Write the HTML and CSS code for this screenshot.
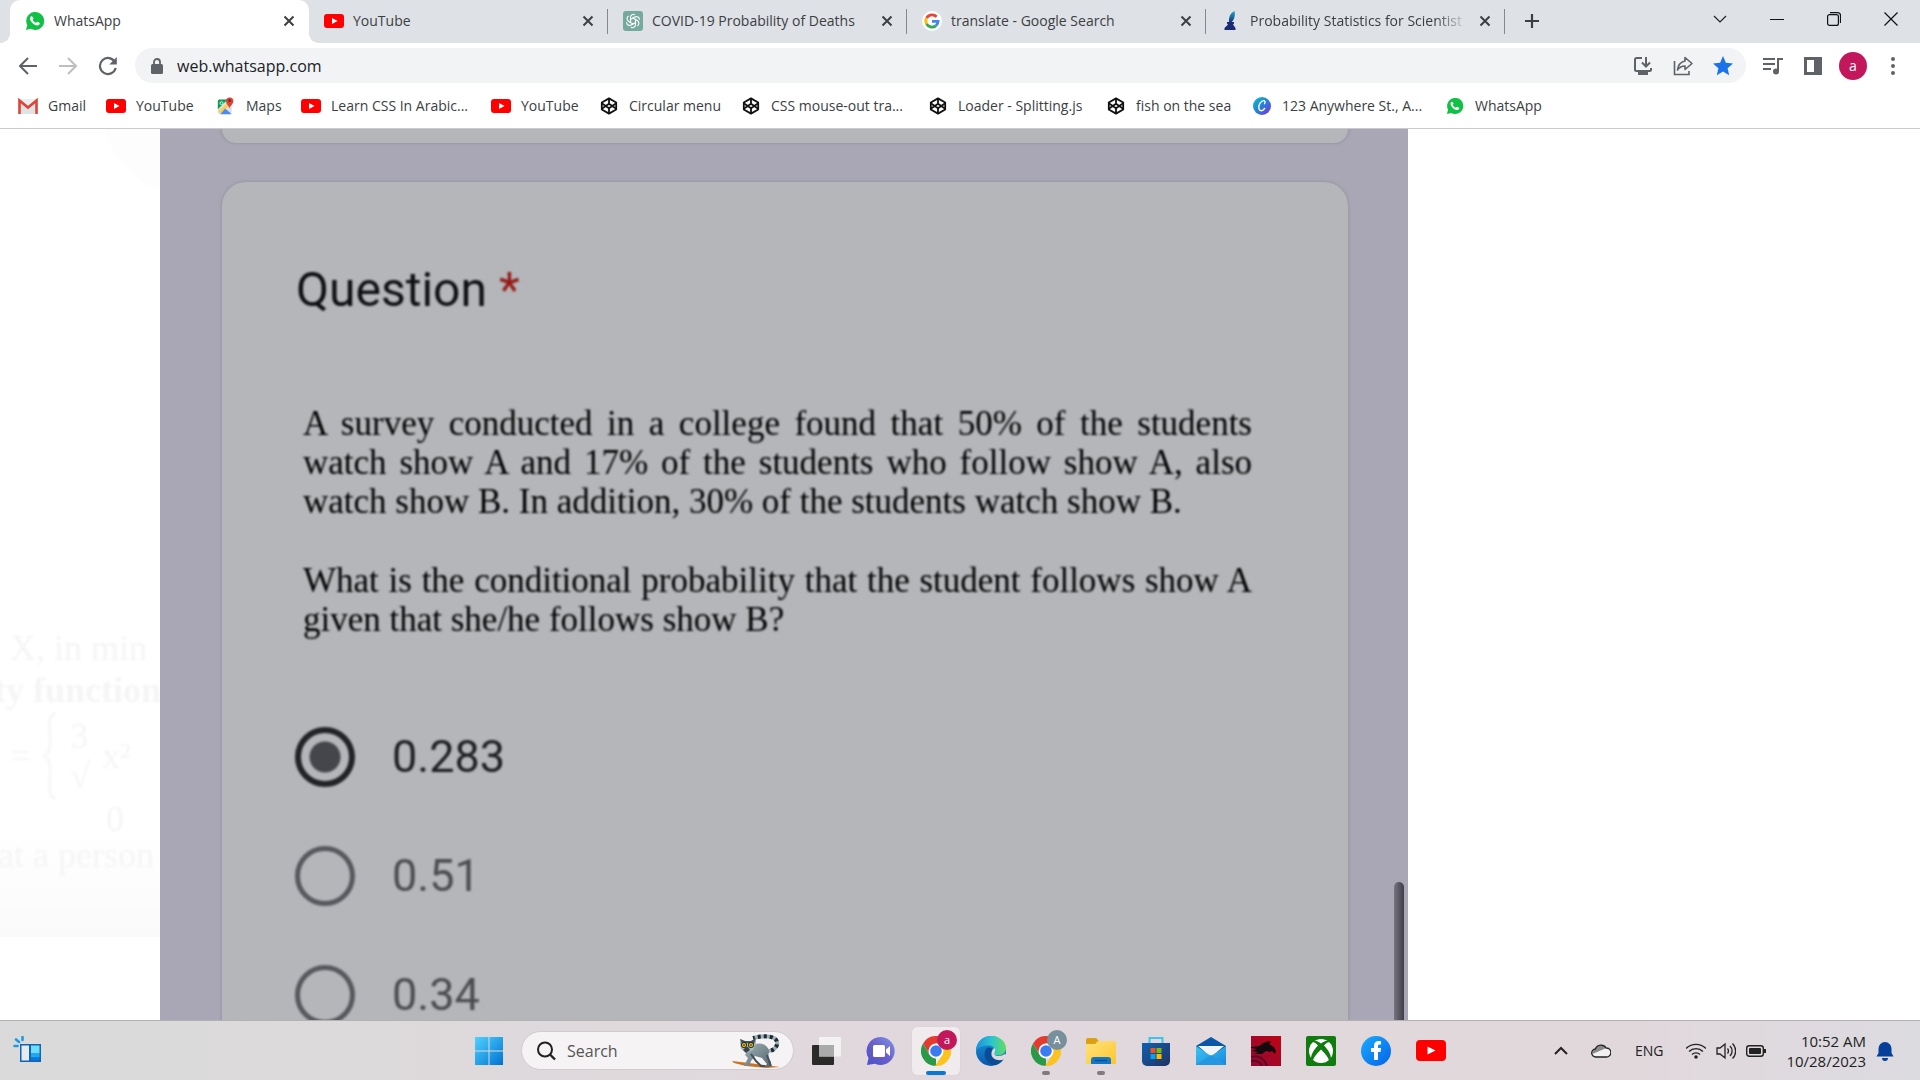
FILE: index.html
```html
<!DOCTYPE html>
<html lang="en">
<head>
<meta charset="utf-8">
<title>WhatsApp</title>
<link rel="stylesheet" href="styles.css">
</head>
<body>
<svg class="defs" aria-hidden="true">
  <defs>
    <linearGradient id="g-canva" x1="0" y1="0" x2="1" y2="1"><stop offset="0" stop-color="#00c4cc"/><stop offset=".5" stop-color="#2a7fd8"/><stop offset="1" stop-color="#7d2ae8"/></linearGradient>
    <linearGradient id="g-quill" x1="0" y1="0" x2="0" y2="1"><stop offset="0" stop-color="#1aa5c8"/><stop offset="1" stop-color="#1b2c74"/></linearGradient>
    <linearGradient id="g-win" x1="0" y1="0" x2="1" y2="1"><stop offset="0" stop-color="#4fd2fd"/><stop offset="1" stop-color="#0072d2"/></linearGradient>
    <linearGradient id="g-chat" x1="0" y1="1" x2="1" y2="0"><stop offset="0" stop-color="#4a50c8"/><stop offset=".5" stop-color="#6a5fc8"/><stop offset="1" stop-color="#7f96ea"/></linearGradient>
    <linearGradient id="g-edge1" x1="0" y1="0" x2="1" y2="0"><stop offset="0" stop-color="#1d8fdc"/><stop offset=".5" stop-color="#2bc3d2"/><stop offset="1" stop-color="#62dd5c"/></linearGradient>
    <linearGradient id="g-edge2" x1="0" y1="0" x2="0" y2="1"><stop offset="0" stop-color="#1a94df"/><stop offset="1" stop-color="#0b59a6"/></linearGradient>
    <linearGradient id="g-folder" x1="0" y1="0" x2="1" y2="1"><stop offset="0" stop-color="#ffe27c"/><stop offset="1" stop-color="#fcc62e"/></linearGradient>
    <linearGradient id="g-store" x1="0" y1="0" x2="1" y2="1"><stop offset="0" stop-color="#0e62b1"/><stop offset="1" stop-color="#22325f"/></linearGradient>
    <linearGradient id="g-mail" x1="0" y1="0" x2="1" y2="1"><stop offset="0" stop-color="#39c6f4"/><stop offset="1" stop-color="#1a86dc"/></linearGradient>
    <linearGradient id="g-fb" x1="0" y1="0" x2="1" y2="1"><stop offset="0" stop-color="#18acfe"/><stop offset="1" stop-color="#0562e8"/></linearGradient>
    <linearGradient id="g-red" x1="0" y1="1" x2="1" y2="0"><stop offset="0" stop-color="#8c0a34"/><stop offset="1" stop-color="#c00414"/></linearGradient>
    <linearGradient id="g-fur" x1="0" y1="0" x2="1" y2="1"><stop offset="0" stop-color="#9fb0b6"/><stop offset="1" stop-color="#55666e"/></linearGradient>

    <symbol id="i-wa" viewBox="0 0 20 20"><path d="M1 19l1.300-4.700A9 9 0 1 1 5.700 17.800z" fill="#10c145"/><path d="M7 5.500c-.6-.5-1.500.1-1.800.9-.8 2.200 1 4.500 2.700 6 1.700 1.500 4.200 2.500 5.700 1.700.8-.4 1.400-1.400 1-2.100-.6-.6-1.500-1.100-2.200-1.300-.6 0-.9 1.200-1.600 1.100-1.300-.4-2.700-1.700-3.200-3 0-.5.900-.9.900-1.500C8.300 6.700 7.600 5.700 7 5.500z" fill="#fff"/></symbol>
    <symbol id="i-yt" viewBox="0 0 20 14"><rect width="20" height="14" rx="3" fill="#f00"/><path d="M8 4l5.500 3L8 10z" fill="#fff"/></symbol>
    <symbol id="i-gpt" viewBox="0 0 20 20"><rect width="20" height="20" rx="3" fill="#75a99c"/><g fill="none" stroke="#fff" stroke-width="1.100"><path d="M7.500 12V6.500c0-2.600 2.600-4 4.600-2.700"/><path d="M7.500 12V6.500c0-2.600 2.600-4 4.600-2.700" transform="rotate(60 10 10)"/><path d="M7.500 12V6.500c0-2.600 2.600-4 4.600-2.700" transform="rotate(120 10 10)"/><path d="M7.500 12V6.500c0-2.600 2.600-4 4.600-2.700" transform="rotate(180 10 10)"/><path d="M7.500 12V6.500c0-2.600 2.600-4 4.600-2.700" transform="rotate(240 10 10)"/><path d="M7.500 12V6.500c0-2.600 2.600-4 4.600-2.700" transform="rotate(300 10 10)"/></g></symbol>
    <symbol id="i-google" viewBox="0 0 20 20"><circle cx="10" cy="10" r="10" fill="#fff"/><g fill="none" stroke-width="2.800"><path d="M14.600 5.800A6.200 6.200 0 0 0 4.600 7" stroke="#ea4335"/><path d="M4.600 7a6.200 6.200 0 0 0 0 6" stroke="#fbbc05"/><path d="M4.600 13a6.200 6.200 0 0 0 9.400 1.600" stroke="#34a853"/><path d="M14 14.600c1.400-1.200 2.100-2.800 2.100-4.300H10" stroke="#4285f4"/></g></symbol>
    <symbol id="i-quill" viewBox="0 0 20 20"><path d="M13.500 0C9 2 7.500 7 8 11l2 1c3-3 4.500-7 3.500-12z" fill="url(#g-quill)"/><path d="M6 11h7v1.500l-1 1 2.500 3.500V19H3.500v-2L7 13.500l-1-1z" fill="#1b2c74"/></symbol>
    <symbol id="i-x" viewBox="0 0 12 12"><path d="M1.500 1.500l9 9M10.500 1.500l-9 9" stroke="#3c4043" stroke-width="2" fill="none"/></symbol>
    <symbol id="i-gmail" viewBox="0 0 20 16"><path d="M1 1h18v15H1z" fill="#eceff1"/><path d="M3 3l7 6 7-6v13H3z" fill="#dfe3e6"/><path d="M1.500 16V2.500L10 9.500l8.500-7V16" fill="none" stroke="#dc4437" stroke-width="2.600"/></symbol>
    <symbol id="i-maps" viewBox="0 0 20 22"><rect y="3" width="17" height="18" rx="2" fill="#dde1e4"/><path d="M0 5a2 2 0 0 1 2-2h10L0 15z" fill="#0f9d58"/><path d="M0 18L15 4l2 3L4 20z" fill="#fbd14b"/><path d="M3 21l6-7 8 7z" fill="#4c8bf5"/><path d="M14 14c0-3-4-5-4-9a4.500 4.500 0 0 1 9 0c0 4-4 6-5 9z" fill="#db4437"/><circle cx="14.500" cy="4.500" r="1.600" fill="#7b231e"/><circle cx="4.500" cy="7.500" r="1.800" fill="none" stroke="#fff"/></symbol>
    <symbol id="i-codepen" viewBox="0 0 20 20"><g fill="none" stroke="#111" stroke-width="2" stroke-linejoin="round"><path d="M10 1.500l8 4.700v7.600l-8 4.700-8-4.700V6.200z"/><path d="M2 7l8 5.500L18 7M2 13l8-5.500 8 5.500M10 1.500v6M10 12.500v6"/></g></symbol>
    <symbol id="i-canva" viewBox="0 0 20 20"><circle cx="10" cy="10" r="10" fill="url(#g-canva)"/><path d="M12.800 7.500c1.200-1.800.4-3.600-1.200-3.400C8.500 4.600 6 9 6.500 12.500c.5 3.400 4 3.800 6.500.2" fill="none" stroke="#fff" stroke-width="1.500" stroke-linecap="round"/></symbol>
    <symbol id="i-chrome" viewBox="0 0 30 30"><path d="M15 7.500h13A15 15 0 0 0 2 7.500l6.500 11z" fill="#e33b2e"/><path d="M2 7.500l6.500 11.300 6.500 3.700L15 30A15 15 0 0 1 2 7.500z" fill="#2a9a48"/><path d="M28 7.500H15l6.500 11.300L14 30A15 15 0 0 0 28 7.500z" fill="#fcc31e"/><circle cx="15" cy="15" r="7.500" fill="#fff"/><circle cx="15" cy="15" r="5.800" fill="#3a7cf0"/></symbol>
  </defs>
</svg>

<header class="browser">
  <nav class="tabs" aria-label="Tabs">
    <div class="tab active"><svg class="fav"><use href="#i-wa"/></svg><span class="title">WhatsApp</span><button class="close" aria-label="Close tab"><svg><use href="#i-x"/></svg></button></div>
    <div class="tab"><svg class="fav"><use href="#i-yt"/></svg><span class="title">YouTube</span><button class="close" aria-label="Close tab"><svg><use href="#i-x"/></svg></button></div>
    <div class="tab"><svg class="fav"><use href="#i-gpt"/></svg><span class="title">COVID-19 Probability of Deaths</span><button class="close" aria-label="Close tab"><svg><use href="#i-x"/></svg></button></div>
    <div class="tab"><svg class="fav"><use href="#i-google"/></svg><span class="title">translate - Google Search</span><button class="close" aria-label="Close tab"><svg><use href="#i-x"/></svg></button></div>
    <div class="tab"><svg class="fav"><use href="#i-quill"/></svg><span class="title fade">Probability Statistics for Scientist</span><button class="close" aria-label="Close tab"><svg><use href="#i-x"/></svg></button></div>
    <button class="newtab" aria-label="New tab"><svg viewBox="0 0 16 16"><path d="M8 1v14M1 8h14" stroke="#3c4043" stroke-width="2.200"/></svg></button>
    <div class="winctl">
      <button aria-label="Search tabs"><svg viewBox="0 0 14 14"><path d="M1 4l6 6 6-6" fill="none" stroke="#222" stroke-width="1.200"/></svg></button>
      <button aria-label="Minimize"><svg viewBox="0 0 14 14"><path d="M0 7.500h14" stroke="#111"/></svg></button>
      <button aria-label="Restore"><svg viewBox="0 0 14 14"><rect x=".6" y="2.600" width="10.800" height="10.800" rx="2" fill="none" stroke="#111" stroke-width="1.200"/><path d="M3 .6h7.500a3 3 0 0 1 3 3V11" fill="none" stroke="#111" stroke-width="1.200"/></svg></button>
      <button aria-label="Close"><svg viewBox="0 0 14 14"><path d="M.5.5l13 13M13.500.5l-13 13" stroke="#111" stroke-width="1.200"/></svg></button>
    </div>
  </nav>

  <div class="toolbar">
    <button class="tool" aria-label="Back"><svg viewBox="0 0 20 20"><path d="M19 10H3M10 2l-8 8 8 8" fill="none" stroke="#5f6368" stroke-width="2"/></svg></button>
    <button class="tool" aria-label="Forward"><svg viewBox="0 0 20 20"><path d="M1 10h16M10 2l8 8-8 8" fill="none" stroke="#bcbec1" stroke-width="2"/></svg></button>
    <button class="tool" aria-label="Reload"><svg viewBox="0 0 20 20"><path d="M17 6.200A8 8 0 1 0 17.700 12" fill="none" stroke="#5f6368" stroke-width="2.200"/><path d="M18.800 1v7.500h-7.500z" fill="#5f6368"/></svg></button>
    <div class="omnibox">
      <svg class="lock" viewBox="0 0 12 16"><rect y="6" width="12" height="10" rx="1.500" fill="#5f6368"/><path d="M3 7V4a3 3 0 0 1 6 0v3" fill="none" stroke="#5f6368" stroke-width="1.800"/></svg>
      <input class="url" type="text" value="web.whatsapp.com" aria-label="Address">
      <button class="tool" aria-label="Install app"><svg viewBox="0 0 20 20"><path d="M9 2H3.500A1.500 1.500 0 0 0 2 3.500v10A1.500 1.500 0 0 0 3.500 15h13a1.500 1.500 0 0 0 1.500-1.500V12" fill="none" stroke="#5f6368" stroke-width="2"/><path d="M5 15h10v4H5z" fill="#5f6368"/><path d="M13 1v9M9 6.500l4 4 4-4" fill="none" stroke="#5f6368" stroke-width="2"/></svg></button>
      <button class="tool" aria-label="Share"><svg viewBox="0 0 20 20"><path d="M1.500 5v13.500H16V15" fill="none" stroke="#5f6368" stroke-width="1.600"/><path d="M12 1.500l7 6-7 6V10c-3.500 0-5.500 1-7.500 4 .5-5 3.500-8 7.500-9z" fill="none" stroke="#5f6368" stroke-width="1.600" stroke-linejoin="round"/></svg></button>
      <button class="tool" aria-label="Edit bookmark"><svg viewBox="0 0 20 20"><path d="M10 0l2.900 6.700 7.100.7-5.400 4.800 1.600 7.100L10 15.600l-6.200 3.700 1.600-7.100L0 7.400l7.100-.7z" fill="#1a73e8"/></svg></button>
    </div>
    <button class="tool" aria-label="Media controls"><svg viewBox="0 0 20 20"><path d="M0 3h12M0 8h12M0 13h8M15 15V3h5" fill="none" stroke="#5f6368" stroke-width="2"/><circle cx="13" cy="15.500" r="3" fill="#5f6368"/></svg></button>
    <button class="tool" aria-label="Side panel"><svg viewBox="0 0 20 20"><path d="M1 1h18v18H1zM4 4v12h7V4z" fill="#5f6368" fill-rule="evenodd"/></svg></button>
    <button class="avatar" aria-label="Profile">a</button>
    <button class="tool" aria-label="Menu"><svg viewBox="0 0 20 20"><g fill="#5f6368"><circle cx="10" cy="3" r="2"/><circle cx="10" cy="10" r="2"/><circle cx="10" cy="17" r="2"/></g></svg></button>
  </div>

  <nav class="bookmarks" aria-label="Bookmarks">
    <a href="#"><svg><use href="#i-gmail"/></svg>Gmail</a>
    <a href="#"><svg><use href="#i-yt"/></svg>YouTube</a>
    <a href="#"><svg><use href="#i-maps"/></svg>Maps</a>
    <a href="#"><svg><use href="#i-yt"/></svg>Learn CSS In Arabic...</a>
    <a href="#"><svg><use href="#i-yt"/></svg>YouTube</a>
    <a href="#"><svg><use href="#i-codepen"/></svg>Circular menu</a>
    <a href="#"><svg><use href="#i-codepen"/></svg>CSS mouse-out tra...</a>
    <a href="#"><svg><use href="#i-codepen"/></svg>Loader - Splitting.js</a>
    <a href="#"><svg><use href="#i-codepen"/></svg>fish on the sea</a>
    <a href="#"><svg><use href="#i-canva"/></svg>123 Anywhere St., A...</a>
    <a href="#"><svg><use href="#i-wa"/></svg>WhatsApp</a>
  </nav>
</header>

<main class="viewer">
  <aside class="ghost">
    <p>X, in min</p>
    <p class="strong">ty function</p>
    <div class="formula">
      <span>=</span>
      <svg class="brace" viewBox="0 0 16 90"><path d="M14 2C4 4 9 20 8 32c0 8-2 11-6 13 4 2 6 5 6 13 1 12-4 28 6 30" fill="none" stroke="#f7f7f7" stroke-width="3"/></svg>
      <span class="frac">3<br>√</span>
      <span>x²</span>
    </div>
    <p class="zero">0</p>
    <p class="last">at a person</p>
  </aside>
  <section class="photo">
    <div class="card previous"></div>
    <form class="card question">
      <h1>Question <span class="star">*</span></h1>
      <div class="statement">
        <p class="full">A survey conducted in a college found that 50% of the students</p>
        <p class="full">watch show A and 17% of the students who follow show A, also</p>
        <p>watch show B. In addition, 30% of the students watch show B.</p>
        <p class="full second">What is the conditional probability that the student follows show A</p>
        <p>given that she/he follows show B?</p>
      </div>
      <div class="options">
        <label class="chosen"><input type="radio" name="answer" checked>0.283</label>
        <label><input type="radio" name="answer">0.51</label>
        <label><input type="radio" name="answer">0.34</label>
      </div>
    </form>
    <div class="thumb"></div>
  </section>
</main>

<footer class="taskbar">
  <div class="left">
    <button class="app" aria-label="Widgets"><svg viewBox="0 0 30 30"><path d="M1.500 10h3M3 3.500l3 2.500M9.500 1v3" stroke="#1c9be0" stroke-width="2.600" stroke-linecap="round"/><rect x="7" y="8" width="21" height="18" fill="#1464b4"/><path d="M8.500 9.500H16v15H8.500z" fill="#e6ebf1"/><path d="M18 9.500h8.500v8H18z" fill="#6cdcff"/><path d="M18 17.500h8.500v4H18z" fill="#1fa6f4"/><path d="M18 21.500h8.500v3H18z" fill="#0a78d8"/></svg></button>
  </div>
  <div class="center">
    <button class="app" aria-label="Start"><svg viewBox="0 0 30 30"><path d="M1 1h13.500v13.500H1zM15.500 1H29v13.500H15.500zM1 15.500h13.500V29H1zM15.500 15.500H29V29H15.500z" fill="url(#g-win)"/></svg></button>
    <div class="search">
      <svg class="glass" viewBox="0 0 20 20"><circle cx="9" cy="8.500" r="7" fill="none" stroke="#222" stroke-width="2"/><path d="M14 13.500l5 5" stroke="#222" stroke-width="2.400"/></svg>
      <input type="text" placeholder="Search" aria-label="Search">
      <svg class="lemur" viewBox="0 0 50 34">
        <path d="M1 27l17 2 31 4-14 1-20-2-12-3z" fill="#c9721f"/>
        <path d="M34 17c8 1 13-4 12-9-1-6-12-7-24-4" fill="none" stroke="#9eb0b8" stroke-width="4"/>
        <path d="M34 17c8 1 13-4 12-9-1-6-12-7-24-4" fill="none" stroke="#1f2b33" stroke-width="4" stroke-dasharray="3 3"/>
        <path d="M18 14c7-7 18-6 20 3l-1 7 3 4-1 5h-6l3-3-5-6-7-2-4 5-2 5h-5l4-8-3-3z" fill="url(#g-fur)"/>
        <path d="M20 20l5 7 5 5h4M36 21l4 11" fill="none" stroke="#425159" stroke-width="2"/>
        <path d="M9 5l5 2h6l5-3v6l-3 6-6 3-6-4-1-5z" fill="#a9b8bd"/>
        <path d="M9 5l5 2h6l5-3-2 6-6-1-6 1z" fill="#435158"/>
        <circle cx="13" cy="11" r="3" fill="#222e35"/><circle cx="20" cy="11" r="3" fill="#222e35"/><circle cx="13" cy="11" r="2" fill="#ffc400"/><circle cx="20" cy="11" r="2" fill="#ffc400"/><circle cx="13" cy="11" r=".8"/><circle cx="20" cy="11" r=".8"/>
        <path d="M12 16l3-3h2l2 3-4 3z" fill="#37444a"/>
      </svg>
    </div>
    <button class="app" aria-label="Task view"><svg viewBox="0 0 30 30"><rect x="1" y="9" width="22" height="20" rx="1" fill="#2a2a28"/><path d="M8 1h22v19.500H8z" fill="#f7f7f7" opacity=".8"/><path d="M8 9h15v11.500H8z" fill="#aaa"/></svg></button>
    <button class="app" aria-label="Chat"><svg viewBox="0 0 30 30"><path d="M15 1a14 14 0 1 1-6 26.800L1 29l1.500-7A14 14 0 0 1 15 1z" fill="url(#g-chat)"/><rect x="7" y="9" width="12" height="12" rx="1.500" fill="#fff"/><path d="M20 13.500l4-3.500v10l-4-3.500z" fill="#fff"/></svg></button>
    <button class="app current" aria-label="Chrome"><svg><use href="#i-chrome"/></svg><span class="badge">a</span></button>
    <button class="app" aria-label="Edge"><svg viewBox="0 0 30 30"><circle cx="15" cy="15" r="15" fill="url(#g-edge2)"/><path d="M0 14C1 5 7 0 15 0c9 0 15 6 15 12 0 5-4 7.500-8 7.500-3 0-5-1-4-3 2-4-1-7-5-7C6 9.500 1 12 0 16z" fill="url(#g-edge1)"/><path d="M10 13c-4 8 1 16 10 16 4-2 7-4 8-7-6 3-13 1-13-4 0-3 1-4 2-4-2-3-5-3-7-1z" fill="#0b4c96"/><path d="M18.500 12c2 3-1 5 0 6.500 2 2.500 8 1.500 10-.5l3 2-3 3c-6 3-13 0-13-5 0-3 1-5 3-6z" fill="#e1d8dd"/></svg></button>
    <button class="app open" aria-label="Chrome, second profile"><svg><use href="#i-chrome"/></svg><span class="badge grey">A</span></button>
    <button class="app open" aria-label="File Explorer"><svg viewBox="0 0 30 30"><path d="M0 4a2 2 0 0 1 2-2h8l3 3v4H0z" fill="#dda012"/><path d="M0 8h9l3-3h16a2 2 0 0 1 2 2v21H0z" fill="url(#g-folder)"/><path d="M5 28v-4a3 3 0 0 1 3-3h14a3 3 0 0 1 3 3v4z" fill="#1475c4"/><path d="M9 24.500h12" stroke="#0a4f93" stroke-width="1.500"/></svg></button>
    <button class="app" aria-label="Store"><svg viewBox="0 0 30 30"><path d="M8.500 8V2h13v6" fill="none" stroke="#3cc3ee" stroke-width="2"/><path d="M1 7h28v18a5 5 0 0 1-5 5H6a5 5 0 0 1-5-5z" fill="url(#g-store)"/><path d="M9.500 12h5v5h-5z" fill="#f25022"/><path d="M15.500 12h5v5h-5z" fill="#7fba00"/><path d="M9.500 18h5v5h-5z" fill="#00a4ef"/><path d="M15.500 18h5v5h-5z" fill="#ffb900"/></svg></button>
    <button class="app" aria-label="Mail"><svg viewBox="0 0 30 30"><path d="M0 10L15 1l15 9v6H0z" fill="#0b56a5"/><path d="M2 10h26L15 21z" fill="#f1f3f5"/><path d="M0 10l15 10 15-10v19H0z" fill="url(#g-mail)"/><path d="M0 29l15-10 15 10z" fill="#2496e2"/></svg></button>
    <button class="app" aria-label="Dragon"><svg viewBox="0 0 30 30"><path d="M0 0h30v30H0z" fill="url(#g-red)"/><path d="M0 11l8-1 4-3 6-2 2 1-2 2 5 3 2 4-1 3-3-3-2 1-4-1-4 3-8 0 4-2-6-1 5-2-6-1z" fill="#16090d"/><path d="M0 21c7-2 13 1 16 9M0 25c5-1 9 1 11 5" fill="none" stroke="#5d0724" stroke-width="2"/></svg></button>
    <button class="app" aria-label="Xbox"><svg viewBox="0 0 30 30"><rect width="30" height="30" rx="2" fill="#107c10"/><circle cx="15" cy="15" r="12" fill="#fff"/><path d="M7 5c3-1 6 1 8 2.500C17 6 20 4 23 5l1 1c-2 0-4 1-6 3.500 4 4 7 9 7 13l-2 2c-1-4-5-8-8-11-3 3-7 7-8 11l-2-2c0-4 3-9 7-13C10 7 8 6 6 6z" fill="#107c10"/></svg></button>
    <button class="app" aria-label="Facebook"><svg viewBox="0 0 30 30"><circle cx="15" cy="15" r="15" fill="url(#g-fb)"/><path d="M13 24v-8h-3v-4h3v-2.500C13 6.500 15 5 17.500 5H20v3.500h-1.500c-1.200 0-1.500.6-1.500 1.500v2h3l-.5 4H17v8z" fill="#fff"/></svg></button>
    <button class="app" aria-label="YouTube"><svg viewBox="0 0 30 30"><rect y="4" width="30" height="21" rx="4" fill="#f00"/><path d="M11.500 10.500l8 4-8 4z" fill="#fff"/></svg></button>
  </div>
  <div class="tray">
    <svg viewBox="0 0 20 20"><path d="M4 13l6-6 6 6" fill="none" stroke="#222" stroke-width="2"/></svg>
    <svg class="cloud" viewBox="0 0 20 20"><path d="M5 16a4 4 0 0 1-.6-8A6 6 0 0 1 15.200 7 4.500 4.500 0 0 1 15.500 16z" fill="#f1f1f1"/><path d="M1.500 13a4 4 0 0 1 3-5A6 6 0 0 1 15.200 7C11 9 6 11 1.500 13z" fill="#8b8b8b"/><path d="M5 16a4 4 0 0 1-.6-8A6 6 0 0 1 15.200 7 4.500 4.500 0 0 1 15.500 16z" fill="none" stroke="#222" stroke-width="1.300"/></svg>
    <span class="lang">ENG</span>
    <div class="status">
      <svg viewBox="0 0 20 20"><g fill="none" stroke="#222" stroke-width="1.300"><path d="M0 7.500a14 14 0 0 1 20 0M3 10.500a10 10 0 0 1 14 0M6 13.500a5.700 5.700 0 0 1 8 0"/></g><circle cx="10" cy="16" r="1.800" fill="#222"/></svg>
      <svg viewBox="0 0 20 20"><g fill="none" stroke="#222" stroke-width="1.300"><path d="M1 7h3l5-4v14l-5-4H1zM11.500 7.500a4 4 0 0 1 0 5M14 5a7 7 0 0 1 0 10M16.500 2.500a10.500 10.500 0 0 1 0 15"/></g></svg>
      <svg viewBox="0 0 20 20"><rect x=".7" y="4.700" width="16.600" height="10.600" rx="2.500" fill="none" stroke="#222" stroke-width="1.400"/><rect x="3" y="7" width="12" height="6" rx="1" fill="#222"/><path d="M18 8h2v4h-2z" fill="#222"/></svg>
    </div>
    <div class="clock"><time>10:52 AM</time><time>10/28/2023</time></div>
    <svg class="bell" viewBox="0 0 20 20"><path d="M10 1a6.500 6.500 0 0 1 6.500 6.500V12l2 3.500h-17l2-3.500V7.500A6.500 6.500 0 0 1 10 1zM7 17h6a3 3 0 0 1-6 0z" fill="#053f97"/></svg>
  </div>
</footer>
</body>
</html>
```
FILE: styles.css
```css
* { box-sizing: border-box; }
body {
  margin: 0;
  height: 100vh;
  display: flex;
  flex-direction: column;
  overflow: hidden;
  background: #fff;
  color: #3c4043;
  font-family: "Open Sans", "Noto Sans", sans-serif;
  font-size: 14px;
}
button, input { font: inherit; color: inherit; }
button { border: 0; padding: 0; background: none; display: grid; place-items: center; }
p, h1 { margin: 0; }
.defs { position: absolute; width: 0; height: 0; }

/* Tab strip */
.tabs { display: flex; height: 43px; padding-left: 10px; background: #dee1e6; }
.tab {
  display: flex;
  align-items: center;
  gap: 9px;
  flex: 0 1 299px;
  min-width: 0;
  height: 41px;
  padding: 0 14px 0 15px;
  position: relative;
}
.tab + .tab:not(.active)::after {
  content: "";
  position: absolute;
  right: 0;
  top: 9px;
  height: 25px;
  width: 1px;
  background: #85888d;
}
.active {
  height: 43px;
  padding-bottom: 2px;
  background: #fff;
  border-radius: 10px 10px 0 0;
}
.active::before, .active::after {
  content: "";
  position: absolute;
  bottom: 0;
  width: 10px;
  height: 10px;
}
.active::before { left: -10px; background: radial-gradient(circle at 0 0, #dee1e6 10px, #fff 10px); }
.active::after { right: -10px; background: radial-gradient(circle at 100% 0, #dee1e6 10px, #fff 10px); }
.fav { flex: none; width: 20px; height: 20px; }
.title { flex: 1; overflow: hidden; white-space: nowrap; }
.fade { -webkit-mask-image: linear-gradient(90deg, #000 84%, transparent 99%); mask-image: linear-gradient(90deg, #000 84%, transparent 99%); }
.close svg { width: 12px; height: 12px; }
.newtab { width: 54px; height: 41px; }
.newtab svg { width: 16px; height: 16px; }
.winctl { display: flex; margin-left: auto; padding-right: 1px; }
.winctl button { width: 57px; height: 37px; }
.winctl svg { width: 14px; height: 14px; }

/* Toolbar */
.toolbar { display: flex; align-items: center; height: 45px; padding: 0 7px 0 8px; }
.tool { width: 40px; height: 36px; }
.tool svg { width: 20px; height: 20px; }
.omnibox {
  flex: 1;
  display: flex;
  align-items: center;
  height: 35px;
  margin: 0 7px;
  padding: 0 3px 0 16px;
  border-radius: 18px;
  background: #f1f3f4;
}
.lock { width: 12px; height: 16px; margin-right: 14px; }
.url { flex: 1; min-width: 0; border: 0; padding: 0; background: none; outline: 0; color: #202124; font-size: 16px; }
.avatar {
  width: 28px;
  height: 28px;
  margin: 0 6px;
  border-radius: 50%;
  background: #c2185b;
  color: #fff;
}

/* Bookmarks */
.bookmarks {
  display: grid;
  grid-template-columns: 88px 110px 85px 190px 108px 142px 187px 178px 146px 193px auto;
  align-items: center;
  height: 41px;
  padding: 0 18px 5px;
  border-bottom: 1px solid #c9cacd;
}
.bookmarks a { display: flex; align-items: center; gap: 10px; color: inherit; text-decoration: none; white-space: nowrap; }
.bookmarks svg { flex: none; width: 20px; height: 18px; }

/* Photo viewer */
.viewer {
  flex: 1;
  min-height: 0;
  overflow: hidden;
  display: grid;
  grid-template-columns: 160px minmax(0, 1fr) 512px;
}
.ghost {
  overflow: hidden;
  padding: 498px 0 0 10px;
  background:
    radial-gradient(circle at 200px -30px, #fdfdfd 100px, transparent 101px),
    linear-gradient(#fff 700px, #fafafa 808px, #fff 808px);
  color: #f5f5f5;
  font: 36px/42px "Liberation Serif", serif;
  white-space: nowrap;
}
.ghost p, .formula { filter: blur(1px); }
.ghost .strong { font-weight: bold; margin-left: -16px; }
.formula { display: flex; align-items: center; gap: 12px; height: 90px; }
.brace { width: 16px; height: 90px; }
.frac { line-height: 40px; }
.zero { padding-left: 96px; line-height: 36px; }
.ghost .last { margin-left: -12px; line-height: 36px; }
.photo { position: relative; overflow: hidden; background: #a9a7b5; }
.card { margin: 0 60px 0 62px; background: #b4b6b9; box-shadow: 0 0 3px 1px #9698a2; }
.previous { height: 14px; border-radius: 0 0 24px 24px; }
.question { margin-top: 39px; padding: 72px 96px 0 74px; border-radius: 24px; height: 960px; }
.question h1 { color: #0e0f13; font: 400 48px/72px Roboto, sans-serif; filter: blur(1px); }
.star { color: #931815; }
.statement {
  margin-top: 78px;
  padding-left: 7px;
  color: #000;
  font: 35px/39px "Liberation Serif", serif;
  filter: blur(1px);
}
.statement p { white-space: nowrap; }
.statement .full { text-align: justify; text-align-last: justify; white-space: normal; }
.statement .second { margin-top: 40px; }
.options { margin-top: 88px; filter: blur(1px); }
.options label { display: flex; align-items: center; gap: 37px; height: 60px; margin-bottom: 59px; color: #4b4d51; font: 45px/60px Roboto, sans-serif; }
.options .chosen { color: #1e1f23; }
.options input { appearance: none; width: 60px; height: 60px; margin: 0 0 0 -1px; border: 5px solid #56585d; border-radius: 50%; }
.options input:checked { border: 6px solid #222327; background: radial-gradient(circle, #44464b 15px, transparent 16px); }
.thumb { position: absolute; right: 4px; bottom: 0; width: 10px; height: 138px; border-radius: 5px 5px 0 0; background: linear-gradient(90deg, #77747f, #3f3d47); }

/* Taskbar */
.taskbar {
  display: grid;
  grid-template-columns: 1fr auto 1fr;
  align-items: center;
  height: 60px;
  border-top: 1px solid #b3b1b3;
  background: linear-gradient(90deg, #dadada, #dcdadb 15%, #e1d8dd 45%, #e1d8dc 85%, #dcdbe0);
  color: #222;
}
.left { padding-left: 13px; }
.center { display: flex; align-items: center; gap: 7px; }
.app { position: relative; width: 48px; height: 48px; border-radius: 5px; }
.app svg { width: 30px; height: 30px; }
.left .app { width: 30px; }
.search {
  display: flex;
  align-items: center;
  width: 273px;
  height: 39px;
  margin: 0 1px;
  padding: 0 12px 0 14px;
  border: 1px solid #d0cbce;
  border-radius: 20px;
  background: #f5f3f4;
}
.glass { width: 20px; height: 20px; }
.search input { flex: 1; min-width: 0; border: 0; background: none; padding: 0 0 0 11px; font-size: 16px; }
.search input::placeholder { color: #555; opacity: 1; }
.lemur { width: 50px; height: 34px; }
.current { background: #f0ecee; box-shadow: 0 0 1px #bbb; }
.current::after, .open::after { content: ""; position: absolute; bottom: 0; width: 20px; height: 4px; border-radius: 2px; background: #0878d3; }
.open::after { width: 8px; background: #7f7a7d; }
.badge {
  position: absolute;
  right: 3px;
  top: 3px;
  width: 20px;
  height: 20px;
  border-radius: 50%;
  background: #c2185b;
  color: #fff;
  font-size: 11px;
  line-height: 20px;
}
.grey { background: #78909c; }
.tray { display: flex; align-items: center; justify-content: flex-end; padding-right: 25px; }
.tray svg { width: 20px; height: 20px; }
.cloud { margin: 0 24px 0 20px; }
.status { display: flex; gap: 10px; margin: 0 20px 0 23px; }
.clock { display: flex; flex-direction: column; align-items: flex-end; font-size: 15px; line-height: 20px; }
.bell { margin-left: 9px; }
```
